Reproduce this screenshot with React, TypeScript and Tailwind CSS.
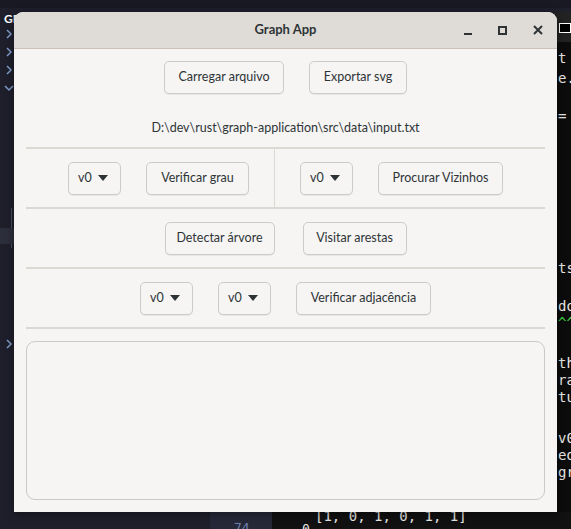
import React from "react";

const ui = { fontFamily: "Lato, 'Noto Sans', sans-serif" };
const mono = { fontFamily: "'DejaVu Sans Mono', 'Liberation Mono', monospace" };

function Btn({ label, w }: { label: string; w: string }) {
  return (
    <button
      className={`${w} h-[33px] shrink-0 rounded-[5px] border border-[#cfcac5] bg-[#f6f5f4] text-[12.5px] text-[#2e3436] shadow-[0_1px_0_rgba(0,0,0,0.06)]`}
    >
      {label}
    </button>
  );
}

function Drop() {
  return (
    <div className="flex h-[33px] w-[53px] shrink-0 items-center justify-between rounded-[5px] border border-[#cfcac5] bg-[#f6f5f4] pl-[9px] pr-[12px] text-[12.5px] text-[#2e3436] shadow-[0_1px_0_rgba(0,0,0,0.06)]">
      <span>v0</span>
      <svg width="10" height="6" viewBox="0 0 10 6">
        <path d="M0 0 L10 0 L5 6 Z" fill="#2e3436" />
      </svg>
    </div>
  );
}

function Sep() {
  return <div className="h-[2px] w-full bg-[#dcd8d4]" />;
}

function Window() {
  return (
    <div
      className="absolute left-[14px] top-[12px] flex h-[500px] w-[543px] flex-col overflow-hidden rounded-t-[9px] bg-[#f6f5f4] shadow-[0_2px_10px_rgba(0,0,0,0.4)]"
      style={ui}
    >
      {/* header bar */}
      <div className="relative flex h-[37px] shrink-0 items-center justify-center border-b border-[#c9c1ba] bg-[#dfdcd8]">
        <span className="text-[13px] font-bold text-[#2e3436]">Graph App</span>
        <div className="absolute right-[14px] top-0 flex h-full items-center gap-[26px]">
          <div className="mt-[8px] h-[2px] w-[8px] bg-[#2e3436]" />
          <div className="h-[9px] w-[9px] border-2 border-[#2e3436]" />
          <svg width="10" height="10" viewBox="0 0 10 10">
            <path d="M1 1 L9 9 M9 1 L1 9" stroke="#2e3436" strokeWidth="2" />
          </svg>
        </div>
      </div>

      <div className="flex flex-1 flex-col px-[12px] pb-[12px]">
        <div className="mt-[12px] flex justify-center gap-[25px]">
          <Btn label="Carregar arquivo" w="w-[120px]" />
          <Btn label="Exportar svg" w="w-[98px]" />
        </div>
        <div className="mt-[24px] mb-[9px] h-[20px] text-center text-[12.5px] leading-[20px] text-[#2e3436]">
          D:\dev\rust\graph-application\src\data\input.txt
        </div>
        <Sep />
        <div className="flex h-[58px] items-center justify-center gap-[25px]">
          <Drop />
          <Btn label="Verificar grau" w="w-[103px]" />
          <div className="h-full w-px bg-[#dcd8d4]" />
          <Drop />
          <Btn label="Procurar Vizinhos" w="w-[125px]" />
        </div>
        <Sep />
        <div className="flex h-[58px] items-center justify-center gap-[28px]">
          <Btn label="Detectar árvore" w="w-[110px]" />
          <Btn label="Visitar arestas" w="w-[104px]" />
        </div>
        <Sep />
        <div className="flex h-[58px] items-center justify-center gap-[25px]">
          <Drop />
          <Drop />
          <Btn label="Verificar adjacência" w="w-[135px]" />
        </div>
        <Sep />
        <div className="mt-[12px] flex-1 rounded-[9px] border border-[#cdc8c3] bg-[#f6f5f4]" />
      </div>
    </div>
  );
}

function Chevron({ down }: { down?: boolean }) {
  return (
    <svg width="10" height="10" viewBox="0 0 10 10">
      <path
        d={down ? "M1 3 L5 7 L9 3" : "M3 1 L7 5 L3 9"}
        stroke="#7f9cc9"
        strokeWidth="1.5"
        fill="none"
      />
    </svg>
  );
}

export default function App() {
  const term: [number, string, string?][] = [
    [50, "t"],
    [70, "e."],
    [108, "="],
    [260, "ts"],
    [298, "do"],
    [315, "^^", "#3fd43f"],
    [355, "th"],
    [372, "ra"],
    [389, "tu"],
    [430, "v0"],
    [447, "ed"],
    [464, "gr"],
  ];
  return (
    <div className="relative h-[529px] w-[571px] overflow-hidden bg-[#1e1f2b]">
      {/* desktop: editor behind */}
      <div className="absolute left-0 top-0 h-[8px] w-full bg-[#181923]" />
      <div className="absolute left-[4px] top-[10px] text-[12px] font-bold text-white" style={ui}>
        GR
      </div>
      <div className="absolute left-[4px] top-[29px] flex flex-col gap-[8px]">
        <Chevron />
        <Chevron />
        <Chevron />
        <Chevron down />
      </div>
      <div className="absolute left-[4px] top-[339px]">
        <Chevron />
      </div>
      <div className="absolute left-[11px] top-[208px] h-[40px] w-[1px] bg-[#4a4c5c]" />
      <div className="absolute left-0 top-[228px] h-[16px] w-[14px] bg-[#2c2e3c]" />

      {/* bottom editor strip */}
      <div className="absolute left-[210px] top-[505px] h-[24px] w-[62px] bg-[#262838]" />
      <div className="absolute left-[234px] top-[521px] text-[13px] leading-[13px] text-[#6d7fae]" style={mono}>
        74
      </div>
      <div className="absolute left-[272px] top-[505px] h-[24px] w-[300px] bg-[#111111]" />
      <div className="absolute left-[315px] top-[506px] text-[14px] text-[#e6e6e6]" style={mono}>
        [1, 0, 1, 0, 1, 1]
      </div>
      <div className="absolute left-[302px] top-[522px] text-[13px] leading-[13px] text-[#e6e6e6]" style={mono}>
        0
      </div>

      {/* right terminal */}
      <div className="absolute left-[540px] top-[12px] h-[30px] w-[40px] bg-[#222222]" />
      <div className="absolute left-[559px] top-[23px] h-[10px] w-[12px] border border-white bg-black" />
      <div className="absolute left-[540px] top-[42px] h-[470px] w-[40px] bg-[#0c0c0c]" />
      {term.map(([y, t, c]) => (
        <div
          key={y}
          className="absolute left-[558px] text-[14px] leading-[17px]"
          style={{ ...mono, top: y, color: c ?? "#e8e8e8" }}
        >
          {t}
        </div>
      ))}

      <Window />
    </div>
  );
}
